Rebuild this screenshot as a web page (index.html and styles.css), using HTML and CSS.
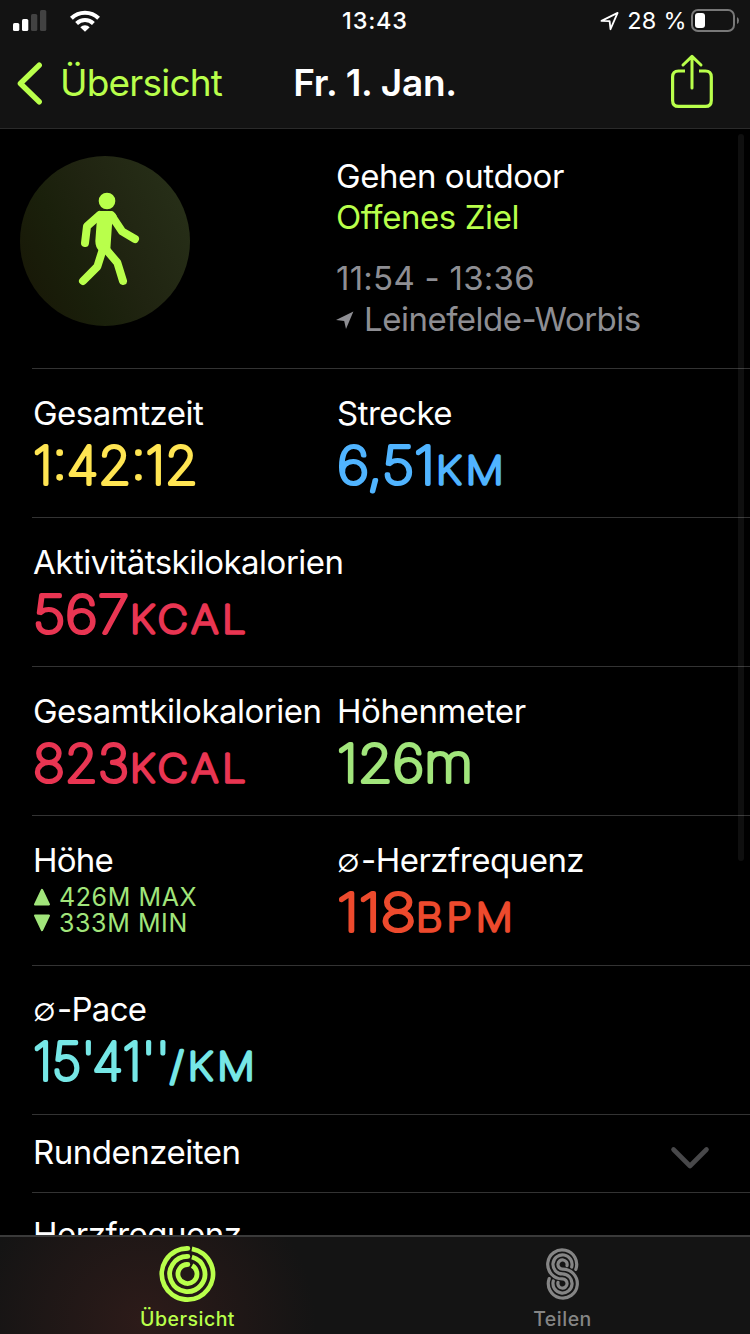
FILE: index.html
```html
<!DOCTYPE html>
<html lang="de">
<head>
<meta charset="utf-8">
<title>Fr. 1. Jan.</title>
<link rel="stylesheet" href="styles.css">
</head>
<body>
<div class="screen">
  <header class="header">
    <div class="status">
      <div class="status-left">
        <svg class="signal" width="34" height="22" viewBox="0 0 34 22">
          <rect x="0" y="13" width="6.3" height="8" rx="1.6" fill="#fff"/>
          <rect x="9" y="9" width="6.3" height="12" rx="1.6" fill="#fff"/>
          <rect x="18" y="4" width="6.3" height="17" rx="1.6" fill="#424242"/>
          <rect x="27" y="0" width="6.3" height="21" rx="1.6" fill="#424242"/>
        </svg>
        <svg class="wifi" width="30" height="22" viewBox="0 0 30 22">
          <g fill="none" stroke="#fff" stroke-width="4">
            <path d="M1.4 8.2A19.4 19.4 0 0 1 28.6 8.2"/>
            <path d="M6.6 13.5A12 12 0 0 1 23.4 13.5"/>
          </g>
          <path d="M15 21.8L10.3 17.3A6.6 6.6 0 0 1 19.7 17.3Z" fill="#fff"/>
        </svg>
      </div>
      <span class="clock">13:43</span>
      <div class="status-right">
        <svg width="20" height="20" viewBox="0 0 20 20"><path d="M2.5 9.9L18.6 1.9L11.5 18.2L10.6 10.1Z" fill="none" stroke="#fff" stroke-width="1.8" stroke-linejoin="round"/></svg>
        <span class="percent">28 %</span>
        <svg class="battery" width="48" height="24" viewBox="0 0 48 24">
          <rect x="1" y="1" width="42" height="21" rx="6" fill="none" stroke="#787878" stroke-width="2"/>
          <path d="M46 8Q48 9 48 11.5Q48 14 46 15Z" fill="#787878"/>
          <rect x="4" y="4" width="10" height="15" rx="3" fill="#fff"/>
        </svg>
      </div>
    </div>
    <nav class="nav">
      <div class="back">
        <svg width="26" height="44" viewBox="0 0 26 44"><path d="M22.2 3.2L3.4 21.5L22.2 39.8" fill="none" stroke="#b9ff4b" stroke-width="5.4" stroke-linecap="round" stroke-linejoin="round"/></svg>
        <span class="back-label">Übersicht</span>
      </div>
      <span class="title">Fr. 1. Jan.</span>
      <svg class="share" width="44" height="56" viewBox="0 0 44 56">
        <g fill="none" stroke="#b9ff4b" stroke-width="3.2" stroke-linejoin="round">
          <path d="M15 17H8.5Q2.6 17 2.6 23V46.4Q2.6 52.4 8.5 52.4H35.4Q41.3 52.4 41.3 46.4V23Q41.3 17 35.4 17H29"/>
          <path d="M22 34V3M13 11L22 2.4L31 11" stroke-linecap="round" stroke-width="3"/>
        </g>
      </svg>
    </nav>
  </header>

  <main class="content">
    <section class="hero">
      <svg class="badge" viewBox="60 48 510 510">
        <defs><linearGradient id="disc" x1="0" y1=".75" x2="1" y2=".25">
          <stop offset="0" stop-color="#181807"/><stop offset=".3" stop-color="#1a200b"/><stop offset=".55" stop-color="#202411"/><stop offset="1" stop-color="#272f18"/>
        </linearGradient></defs>
        <circle cx="315" cy="303" r="255" fill="url(#disc)"/>
        <g fill="#b9ff4b">
          <circle cx="321" cy="183" r="25"/>
          <path d="M298 213H328Q342 213 350 227L336 254L331 328L298 333Q286 322 286 303L290 248Z"/>
        </g>
        <g fill="none" stroke="#b9ff4b" stroke-width="24" stroke-linecap="round" stroke-linejoin="round">
          <path d="M299 225L261 259L255 309"/>
          <path d="M334 226L366 274L405 297"/>
          <path d="M309 326L292 380L249 423"/>
          <path d="M318 328L352 368L369 423"/>
        </g>
      </svg>
      <div class="hero-text">
        <div class="label"><span class="t-type">Gehen outdoor</span></div>
        <div class="label accent"><span class="t-type">Offenes Ziel</span></div>
        <div class="label muted gap"><span class="t-time">11:54 - 13:36</span></div>
        <div class="label muted place"><svg width="18" height="18" viewBox="0 0 18 18"><path d="M0 8.9L17.4 .6L10 18L8.2 9.9Z" fill="#8e8e93"/></svg><span>Leinefelde-Worbis</span></div>
      </div>
    </section>

    <section class="row">
      <div class="cell">
        <div class="label"><span>Gesamtzeit</span></div>
        <svg class="value yellow"><text class="num" x="0" y="49.5" textLength="165" lengthAdjust="spacingAndGlyphs">1:42:12</text></svg>
      </div>
      <div class="cell">
        <div class="label"><span>Strecke</span></div>
        <svg class="value blue"><text class="num" x="0" y="49.5" textLength="98" lengthAdjust="spacingAndGlyphs">6,51</text><text class="unit" x="99" y="49.5" textLength="72" lengthAdjust="spacingAndGlyphs">KM</text></svg>
      </div>
    </section>
    <section class="row">
      <div class="cell">
        <div class="label"><span>Aktivitätskilokalorien</span></div>
        <svg class="value red"><text class="num" x="0" y="49.5" textLength="96" lengthAdjust="spacingAndGlyphs">567</text><text class="unit" x="97" y="49.5" textLength="120" lengthAdjust="spacingAndGlyphs">KCAL</text></svg>
      </div>
    </section>
    <section class="row">
      <div class="cell">
        <div class="label"><span>Gesamtkilokalorien</span></div>
        <svg class="value red"><text class="num" x="0" y="49.5" textLength="96" lengthAdjust="spacingAndGlyphs">823</text><text class="unit" x="97" y="49.5" textLength="120" lengthAdjust="spacingAndGlyphs">KCAL</text></svg>
      </div>
      <div class="cell">
        <div class="label"><span class="t-type">Höhenmeter</span></div>
        <svg class="value green"><text class="num" x="0" y="49.5" textLength="136" lengthAdjust="spacingAndGlyphs">126m</text></svg>
      </div>
    </section>
    <section class="row tall">
      <div class="cell">
        <div class="label"><span class="t-alt">Höhe</span></div>
        <div class="minmax">
          <div class="mm"><svg width="18" height="18" viewBox="0 0 18 18"><path d="M9 1.8L16 16.4H2Z" fill="#a1e57b" stroke="#a1e57b" stroke-width="2" stroke-linejoin="round"/></svg><span>426M MAX</span></div>
          <div class="mm"><svg width="18" height="18" viewBox="0 0 18 18"><path d="M9 16.2L16 1.6H2Z" fill="#a1e57b" stroke="#a1e57b" stroke-width="2" stroke-linejoin="round"/></svg><span>333M MIN</span></div>
        </div>
      </div>
      <div class="cell">
        <div class="label"><span class="avg">∅</span><span>-Herzfrequenz</span></div>
        <svg class="value orange"><text class="num" x="0" y="49.5" textLength="79" lengthAdjust="spacingAndGlyphs">118</text><text class="unit" x="79" y="49.5" textLength="101" lengthAdjust="spacingAndGlyphs">BPM</text></svg>
      </div>
    </section>
    <section class="row pace">
      <div class="cell">
        <div class="label"><span class="avg">∅</span><span class="t-pace">-Pace</span></div>
        <svg class="value cyan"><text class="num" x="0" y="49.5" textLength="137" lengthAdjust="spacingAndGlyphs">15'41''</text><text class="unit" x="137" y="49.5" textLength="89" lengthAdjust="spacingAndGlyphs">/KM</text></svg>
      </div>
    </section>
    <section class="row laps">
      <div class="label"><span>Rundenzeiten</span></div>
      <svg class="chevron" width="40" height="24" viewBox="0 0 40 24"><path d="M3.5 3.5L20 20L36.5 3.5" fill="none" stroke="#48484a" stroke-width="4.6" stroke-linecap="round" stroke-linejoin="round"/></svg>
    </section>
    <section class="row last">
      <div class="label"><span>Herzfrequenz</span></div>
    </section>
  </main>

  <footer class="tabs">
    <div class="tab active">
      <svg width="58" height="58" viewBox="-28.5 -29 58 58">
        <g fill="none" stroke="#b9ff4b" stroke-width="4.8">
          <path d="M4.4 -25.2A25.6 25.6 0 1 1 0 -25.6"/>
          <path d="M4.4 -17A17.6 17.6 0 1 1 0 -17.6"/>
          <path d="M4.6 -8.3A9.5 9.5 0 1 1 0 -9.5"/>
        </g>
        <g fill="#b9ff4b"><circle cx=".3" cy="-25.6" r="2.4"/><circle cx=".3" cy="-17.6" r="2.4"/><circle cx=".3" cy="-9.5" r="2.4"/></g>
      </svg>
      <span>Übersicht</span>
    </div>
    <div class="tab">
      <svg width="58" height="58" viewBox="-28.5 -29 58 58">
        <g fill="none" stroke="#858585" stroke-width="3.2" stroke-linecap="round">
          <path d="M13.3 -4.6A14.5 14.5 0 1 0 0 4.9A4.6 4.6 0 1 1 -4.5 8.4"/>
          <path d="M9.2 -7A9.55 9.55 0 1 0 0 -.05A9.55 9.55 0 1 1 -9.2 7"/>
          <path d="M4.5 -8.4A4.6 4.6 0 1 0 0 -4.9A14.5 14.5 0 1 1 -13.3 4.6"/>
        </g>
      </svg>
      <span>Teilen</span>
    </div>
  </footer>
  <div class="scrollbar"></div>
</div>
</body>
</html>
```
FILE: styles.css
```css
* { box-sizing: border-box; }
body { margin: 0; background: #000; font-family: Inter, "Liberation Sans", sans-serif; }
svg { display: block; flex: none; }
span { white-space: nowrap; }
.screen { position: relative; display: flex; flex-direction: column; width: 750px; height: 1334px; overflow: hidden; background: #000; color: #fff; }

.header { flex: none; height: 129px; background: #131313; border-bottom: 1px solid #2a2a2a; }
.status { display: grid; grid-template-columns: 1fr auto 1fr; height: 40px; align-items: center; }
.status-left { display: flex; gap: 23px; padding-left: 13px; }
.clock { font-size: 23.5px; font-weight: 500; letter-spacing: .8px; line-height: 42px; }
.status-right { display: flex; justify-content: flex-end; align-items: center; padding-right: 11px; }
.percent { margin-left: 8px; font-size: 23.5px; line-height: 42px; letter-spacing: .3px; }
.battery { margin-left: 4px; }
.nav { display: grid; grid-template-columns: 1fr auto 1fr; align-items: center; height: 88px; }
.back { display: flex; align-items: center; padding-left: 17px; gap: 17px; color: #b9ff4b; font-size: 37px; }
.back-label { letter-spacing: -.8px; padding-bottom: 3px; }
.title { font-size: 37px; font-weight: 600; letter-spacing: -.3px; padding-bottom: 3px; }
.share { justify-self: end; margin-right: 36px; margin-top: -4px; }

.content { flex: 1; min-height: 0; overflow: hidden; }
.hero { display: flex; height: 240px; padding: 27px 0 0 20px; }
.badge { width: 170px; height: 170px; }
.hero-text { margin-left: 146px; }
.label { display: flex; height: 41px; font-size: 33px; line-height: 41px; letter-spacing: -.5px; }
.t-type { letter-spacing: -.42px; }
.t-time { letter-spacing: .25px; }
.t-pace { letter-spacing: -.7px; }
.t-alt { letter-spacing: -.8px; }
.accent { color: #b9ff4b; }
.muted { color: #8e8e93; }
.gap { margin-top: 20px; }
.place { align-items: center; gap: 10px; }
.hero, .row { background: linear-gradient(#333, #333) 32px 100% / 718px 1px no-repeat; }
.row { display: grid; grid-template-columns: 304px 1fr; height: 149px; padding: 24px 0 0 33px; }
.row.tall { height: 150px; }
.row.pace { padding-top: 23px; }
.value { width: 280px; height: 60px; overflow: visible; stroke-width: 3.9px; stroke-linejoin: round; font-weight: 100; }
.num { font-size: 52px; }
.unit { font-size: 38.5px; stroke-width: 3.6px; letter-spacing: 4px; }
.yellow { fill: #ffe552; stroke: #ffe552; }
.blue { fill: #50b4ff; stroke: #50b4ff; }
.red { fill: #e93552; stroke: #e93552; }
.green { fill: #a1e57b; stroke: #a1e57b; }
.orange { fill: #ed4a2d; stroke: #ed4a2d; }
.cyan { fill: #76e7e6; stroke: #76e7e6; }
.minmax { color: #a1e57b; font-size: 25px; font-weight: 400; letter-spacing: .6px; line-height: 26px; padding-top: 3px; }
.mm { display: flex; align-items: center; gap: 8px; height: 26px; }
.avg { width: 24px; font-weight: 300; }
.row.laps { grid-template-columns: 1fr auto; height: 78px; padding-top: 17px; padding-right: 40px; }
.chevron { margin-top: 14px; }
.row.last { background: none; padding-top: 21px; }

.tabs { flex: none; display: grid; grid-template-columns: 1fr 1fr; height: 99px; border-top: 2px solid #3a3a3a; background: radial-gradient(ellipse 170px 160px at 145px 85px, #2d1b19, rgba(45, 27, 25, 0) 100%), #141414; }
.tab { display: flex; flex-direction: column; align-items: center; padding-top: 8px; color: #858585; font-size: 19.5px; font-weight: 500; line-height: 24px; letter-spacing: .5px; }
.tab span { margin-top: 4px; }
.active { color: #b9ff4b; }
.scrollbar { position: absolute; left: 738px; top: 134px; width: 6px; height: 727px; border-radius: 3px; background: rgba(255, 255, 255, .06); }
```
